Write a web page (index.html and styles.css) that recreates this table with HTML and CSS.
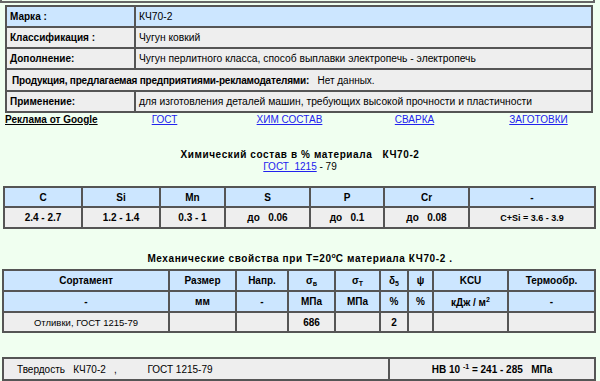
FILE: index.html
```html
<!DOCTYPE html>
<html lang="ru">
<head>
<meta charset="utf-8">
<title>КЧ70-2</title>
<link rel="stylesheet" href="styles.css">
</head>
<body>
<div class="topframe"></div>

<table class="info">
  <tr class="blue"><td class="lbl">Марка :</td><td>КЧ70-2</td></tr>
  <tr><td class="lbl">Классификация :</td><td>Чугун ковкий</td></tr>
  <tr><td class="lbl">Дополнение:</td><td>Чугун перлитного класса, способ выплавки электропечь - электропечь</td></tr>
  <tr class="tall"><td colspan="2" class="prod"><b>Продукция, предлагаемая предприятиями-рекламодателями:</b>&nbsp;&nbsp; Нет данных.</td></tr>
  <tr><td class="lbl">Применение:</td><td>для изготовления деталей машин, требующих высокой прочности и пластичности</td></tr>
</table>

<div class="links">
  <a class="ad" href="#">Реклама от Google</a>
  <a href="#">ГОСТ</a>
  <a href="#">ХИМ СОСТАВ</a>
  <a href="#">СВАРКА</a>
  <a href="#">ЗАГОТОВКИ</a>
</div>

<div class="title chem-title">Химический состав в % материала&nbsp;&nbsp; КЧ70-2</div>
<div class="gost"><a href="#">ГОСТ&nbsp; 1215</a> - 79</div>

<table class="grid chem">
  <colgroup><col style="width:78px"><col style="width:78px"><col style="width:65px"><col style="width:85px"><col style="width:74px"><col style="width:85px"><col></colgroup>
  <tr class="blue r1"><td>C</td><td>Si</td><td>Mn</td><td>S</td><td>P</td><td>Cr</td><td>-</td></tr>
  <tr class="gray r2"><td>2.4 - 2.7</td><td>1.2 - 1.4</td><td>0.3 - 1</td><td>до&nbsp;&nbsp; 0.06</td><td>до&nbsp;&nbsp; 0.1</td><td>до&nbsp;&nbsp; 0.08</td><td class="sm">C+Si = 3.6 - 3.9</td></tr>
</table>

<div class="title mech-title">Механические свойства при T=20<sup>o</sup>C материала КЧ70-2 .</div>

<table class="grid mech">
  <colgroup><col style="width:166px"><col style="width:67px"><col style="width:52px"><col style="width:47px"><col style="width:45px"><col style="width:28px"><col style="width:25px"><col style="width:75px"><col></colgroup>
  <tr class="blue r1"><td>Сортамент</td><td>Размер</td><td>Напр.</td><td>σ<sub>в</sub></td><td>σ<sub>T</sub></td><td>δ<sub>5</sub></td><td>ψ</td><td>KCU</td><td>Термообр.</td></tr>
  <tr class="blue r2"><td>-</td><td>мм</td><td>-</td><td>МПа</td><td>МПа</td><td>%</td><td>%</td><td>кДж / м<sup>2</sup></td><td>-</td></tr>
  <tr class="gray r3"><td class="norm">Отливки, ГОСТ 1215-79</td><td></td><td></td><td>686</td><td></td><td>2</td><td></td><td></td><td></td></tr>
</table>

<table class="grid hard">
  <tr class="gray"><td class="hl">Твердость&nbsp;&nbsp; КЧ70-2&nbsp;&nbsp; ,&nbsp;&nbsp;&nbsp;&nbsp;&nbsp;&nbsp;&nbsp;&nbsp;&nbsp;&nbsp; ГОСТ 1215-79</td><td class="hr">HB 10 <sup>-1</sup> = 241 - 285&nbsp;&nbsp; МПа</td></tr>
</table>
</body>
</html>
```
FILE: styles.css
```css
html, body {
  margin: 0;
  padding: 0;
  background: #f0fff0;
  font-family: "Liberation Sans", Arial, sans-serif;
  font-size: 10px;
  color: #000;
  overflow: hidden;
}

.topframe {
  width: 591px;
  height: 1px;
  border: 2px solid #666;
  border-top: 0;
}

table {
  border-collapse: collapse;
  table-layout: fixed;
}

td {
  border: 2px solid #555;
  padding: 0 6px;
  white-space: nowrap;
}

.blue td { background: #cce6ff; }
.gray td { background: #eeeeee; }

.info {
  margin: 2px 0 0 5px;
  width: 588px;
}
.info td {
  background: #eeeeee;
  height: 19px;
  padding: 0 3px;
  font-size: 10.3px;
}
.info .blue td { background: #cce6ff; }
.info td.lbl {
  width: 121px;
  font-weight: bold;
  font-size: 10px;
}
.info .tall td { height: 20px; }
.info td.prod { padding-left: 5px; font-size: 10px; }
.info td.prod b { letter-spacing: -0.2px; }

.links {
  display: grid;
  grid-template-columns: 97px 125px 125px 125px 123px;
  margin-left: 5px;
  height: 14px;
  line-height: 14px;
}
.links a {
  color: #2222ee;
  text-align: center;
}
.links a.ad {
  color: #000;
  font-weight: bold;
  text-align: left;
}

.title {
  font-weight: bold;
  letter-spacing: 0.6px;
  text-align: center;
  line-height: 12px;
}
.title sup { font-size: 7px; vertical-align: 4px; letter-spacing: 0; }
.chem-title { margin-top: 22px; }
.gost {
  text-align: center;
  line-height: 12px;
}
.gost a { color: #2222ee; }

.grid td {
  text-align: center;
  font-weight: bold;
  padding: 0 2px;
}

.chem {
  margin: 13px 0 0 3px;
  width: 593px;
}
.chem .r1 td { height: 18px; }
.chem .r2 td { height: 19px; }
.chem td.sm { font-size: 9px; }

.mech-title { margin-top: 21px; }

.mech {
  margin: 4px 0 0 2px;
  width: 594px;
}
.mech .r1 td, .mech .r2 td { height: 19px; }
.mech .r3 td { height: 18px; }
.mech td.norm { font-weight: normal; font-size: 9.5px; }
.mech sub { font-size: 7px; vertical-align: -2px; }
.mech sup, .hard sup { font-size: 7px; vertical-align: 4px; }

.hard {
  margin: 24px 0 0 2px;
  width: 594px;
}
.hard td { height: 20px; }
.hard td.hl {
  width: 369px;
  text-align: left;
  font-weight: normal;
  padding-left: 13px;
}
.hard td.hr { background: #eeeeee; }
```
